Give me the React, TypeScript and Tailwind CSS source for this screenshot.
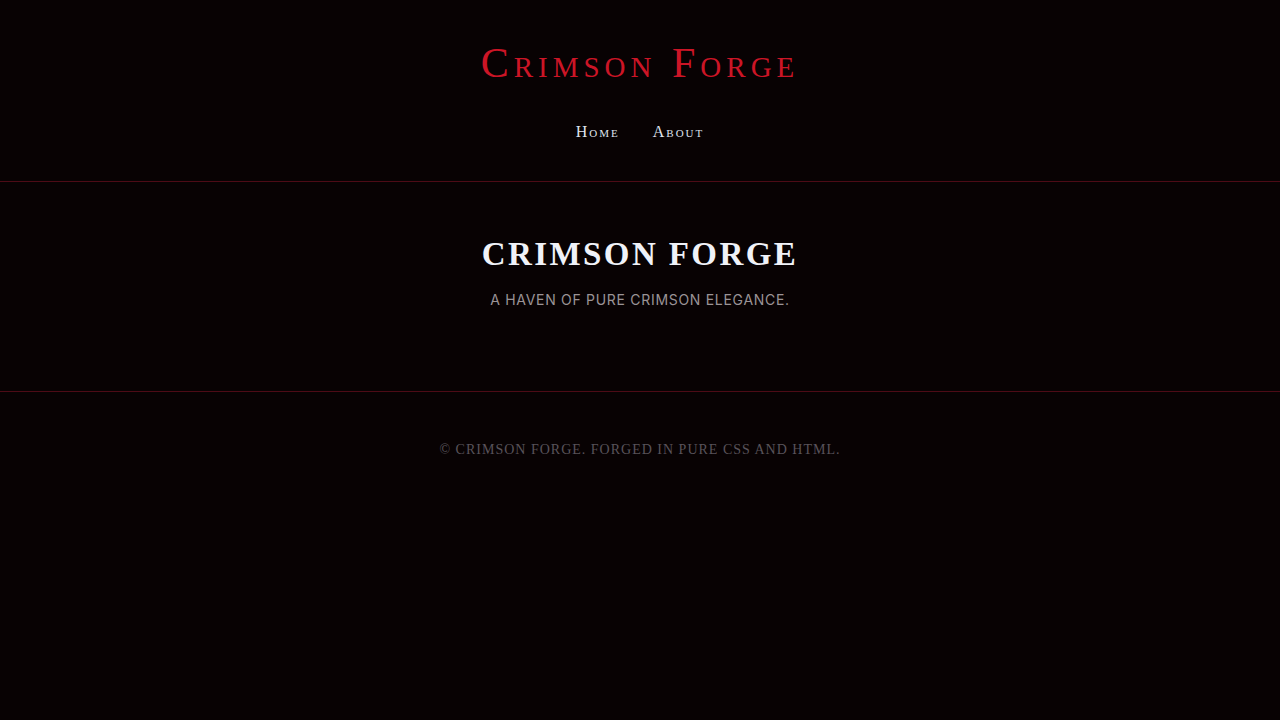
export default function App() {
  return (
    <div className="min-h-screen w-full bg-[#080203] text-[#e6e8f0] font-['Liberation_Serif',serif]">
      {/* Header */}
      <header className="border-b border-[#4d0b16] pt-[38px] pb-[39px] flex flex-col items-center">
        <h1 className="text-[42px] leading-[50px] text-[#cc1526] [font-variant:small-caps] tracking-[5px]">
          Crimson Forge
        </h1>
        <nav className="mt-[34px] flex items-center gap-[33px] text-[16px] leading-[20px] [font-variant:small-caps] tracking-[2px] text-[#dfe3ee]">
          <a href="#" className="hover:text-[#cc1526]">Home</a>
          <a href="#" className="hover:text-[#cc1526]">About</a>
        </nav>
      </header>

      {/* Hero */}
      <section className="border-b border-[#4d0b16] pt-[52px] pb-[81px] flex flex-col items-center">
        <h2 className="text-[33px] leading-[40px] font-bold uppercase tracking-[2.4px] text-[#f0f2f8]">
          Crimson Forge
        </h2>
        <p className="mt-[16px] text-[14px] leading-[20px] uppercase tracking-[0.7px] text-[#9a9396] font-['Inter',sans-serif]">
          A haven of pure crimson elegance.
        </p>
      </section>

      {/* Footer */}
      <footer className="pt-[48px] flex justify-center">
        <p className="text-[14px] leading-[20px] uppercase tracking-[1px] text-[#58535a]">
          © Crimson Forge. Forged in pure CSS and HTML.
        </p>
      </footer>
    </div>
  );
}
